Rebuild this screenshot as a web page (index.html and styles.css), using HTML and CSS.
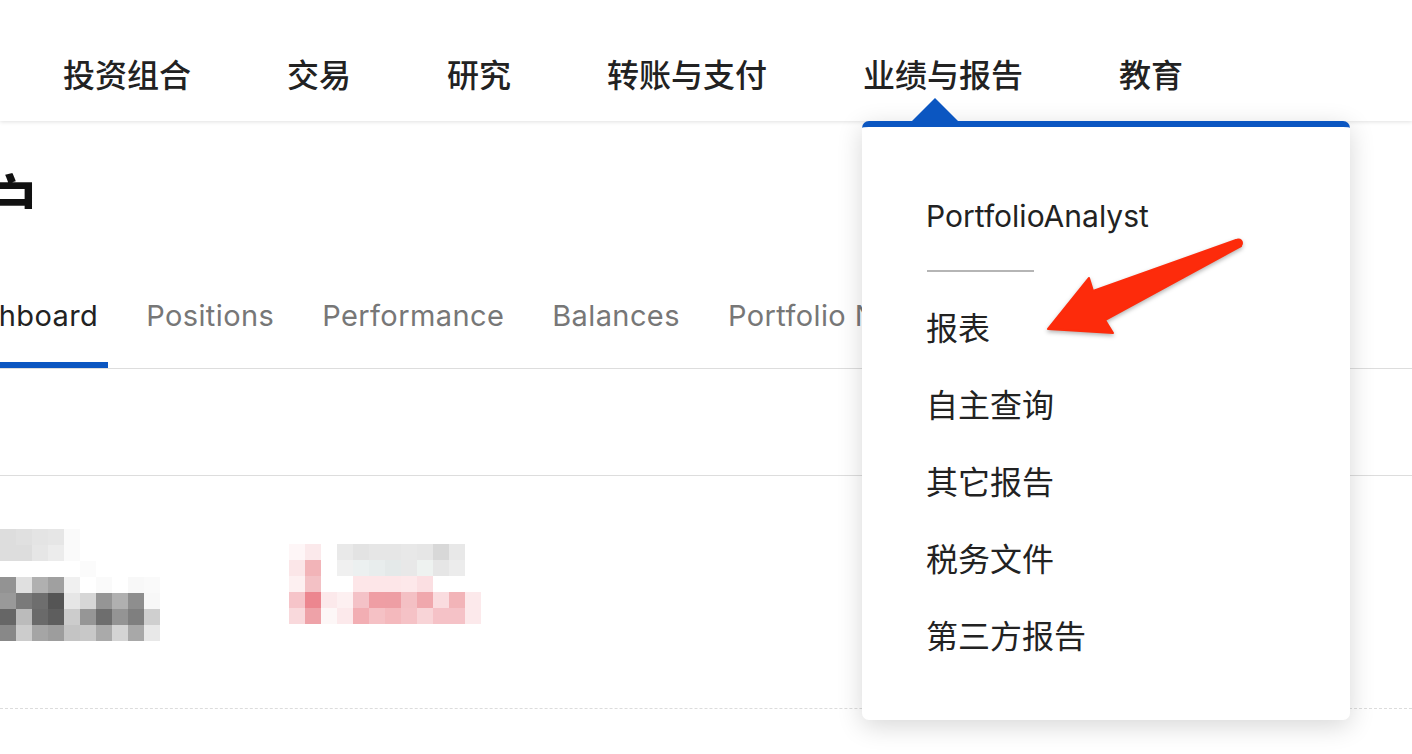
FILE: index.html
```html
<!DOCTYPE html>
<html lang="zh-CN">
<head>
    <meta charset="UTF-8">
    <meta name="viewport" content="width=device-width, initial-scale=1.0">
    <title>业绩与报告</title>
    <link rel="stylesheet" href="styles.css">
</head>
<body>
    <header id="topbar">
        <nav id="mainnav">
            <a class="navitem">投资组合</a>
            <a class="navitem">交易</a>
            <a class="navitem">研究</a>
            <a class="navitem">转账与支付</a>
            <div class="navitem open">业绩与报告
                <div class="dropdown">
                    <div class="dd-head">PortfolioAnalyst</div>
                    <div class="dd-sep"></div>
                    <a class="dd-item">报表</a>
                    <a class="dd-item">自主查询</a>
                    <a class="dd-item">其它报告</a>
                    <a class="dd-item">税务文件</a>
                    <a class="dd-item">第三方报告</a>
                </div>
            </div>
            <a class="navitem">教育</a>
        </nav>
    </header>

    <main id="page">
        <h1 class="title">账户</h1>
        <div class="tabs">
            <a class="tab active">Dashboard</a>
            <a class="tab">Positions</a>
            <a class="tab">Performance</a>
            <a class="tab">Balances</a>
            <a class="tab">Portfolio Navigator</a>
        </div>
        <div class="filters"></div>
        <div class="summary">
            <div id="blurleft" class="blur"></div>
            <div id="blurright" class="blur right"></div>
        </div>
    </main>

    <svg class="annotation" width="1412" height="754" viewBox="0 0 1412 754">
        <g class="arrow">
            <path d="M1236,240 L1093,291 L1089,278 L1048,329 L1113,333 L1105,320 L1241,246 Z"/>
            <circle cx="1238.5" cy="243" r="3.5"/>
        </g>
    </svg>

    <script>
        // pixelated (redacted) numbers, one colour per 16px cell
        var leftRows = [
            ["#ddd","#e0e0e0","#e4e4e4","#e6e6e6","#fafafa","","","","",""],
            ["#ddd","#ddd","#e6e6e6","#ececec","#fafafa","","","","",""],
            ["","","","","","#fbfbfb","","","",""],
            ["#939393","#e0e0e0","#b0b0b0","#a0a0a0","#f0f0f0","","#fafafa","","#f8f8f8","#fafafa"],
            ["#999","#7a7a7a","#6e6e6e","#555","#e6e6e6","#d6d6d6","#959595","#b0b0b0","#8e8e8e","#f8f8f8"],
            ["#666","#bbb","#6a6a6a","#5e5e5e","#ccc","#969696","#6e6e6e","#949494","#7f7f7f","#cfcfcf"],
            ["#888","#ccc","#a5a5a5","#9d9d9d","#c4c4c4","#c8c8c8","#aaa","#d4d4d4","#a8a8a8","#e8e8e8"]
        ];
        var rightRows = [
            ["#fef6f7","#fbe9eb","","#e9e9e9","#e3e3e3","#e6e6e6","#e6e6e6","#e8e8e8","#e6e6e6","#d8d8d8","#e8e8e8",""],
            ["#fbe6e8","#f2b4b8","","#f0f0f0","#ecf0f0","#e8eded","#e4e9e9","#e8e8e8","#eef2f0","#e6e6e6","#ececec",""],
            ["#fdf0f1","#f3c1c5","","","#fde6e8","#fde6e8","#fde6e8","#fde8ea","#fbdfe2","","",""],
            ["#f6c4c9","#ec868f","#fce9eb","#fdf0f1","#f4c2c7","#ef9ea4","#ee9ea4","#f4c0c4","#f0a8ad","#fadcdf","#f2b4b8","#fce9eb"],
            ["#f9d9dc","#eea2a8","#fdf7f7","#fce9eb","#f2aeb3","#f5c1c5","#f4b9bd","#f5c2c6","#f8d4d7","#f5c2c7","#f5c2c7","#fce9eb"]
        ];

        function makeBlur(id, rows){
            var clutter = "";
            rows.forEach(function(row){
                row.forEach(function(c){
                    clutter += `<div class="cell" style="background-color:${c || 'transparent'}"></div>`;
                });
            });
            var el = document.querySelector(id);
            el.style.gridTemplateColumns = `repeat(${rows[0].length}, 16px)`;
            el.innerHTML = clutter;
        }

        makeBlur("#blurleft", leftRows);
        makeBlur("#blurright", rightRows);
    </script>
</body>
</html>
```

FILE: styles.css
```css
*{
    margin: 0;
    padding: 0;
    box-sizing: border-box;
}
html,body{
    width: 100%;
    height: 100%;
}
body{
    position: relative;
    overflow: hidden;
    background-color: #fff;
    color: #222;
    font-family: Inter, "Noto Sans CJK SC", sans-serif;
}
a{
    color: inherit;
    text-decoration: none;
}

/* top navigation */
#topbar{
    position: relative;
    z-index: 5;
    height: 121px;
    background-color: #fff;
    box-shadow: 0 1px 4px rgba(0, 0, 0, 0.12);
}
#mainnav{
    display: flex;
    align-items: flex-start;
    gap: 96px;
    padding: 57px 0 0 63px;
    font-family: "Noto Sans CJK SC", sans-serif;
    font-size: 32px;
    font-weight: 500;
    line-height: 32px;
    color: #222;
}
.navitem{
    position: relative;
    white-space: nowrap;
}

/* dropdown of the open menu */
.dropdown{
    position: absolute;
    top: 64px;
    left: -1px;
    width: 488px;
    height: 599px;
    padding: 71px 0 0 64px;
    background-color: #fff;
    border-top: 6px solid #0b56c1;
    border-radius: 7px;
    box-shadow: 0 6px 26px rgba(0, 0, 0, 0.16);
    font-weight: 400;
}
.dropdown::before{
    content: "";
    position: absolute;
    top: -29px;
    left: 50px;
    border-left: 23px solid transparent;
    border-right: 23px solid transparent;
    border-bottom: 23px solid #0b56c1;
}
.dd-head{
    font-family: Inter, sans-serif;
    font-size: 30px;
    line-height: 36px;
    color: #222;
}
.dd-sep{
    width: 107px;
    height: 2px;
    margin: 36px 0 16px 1px;
    background-color: #b5b5b5;
}
.dd-item{
    display: block;
    height: 77px;
    line-height: 77px;
    font-size: 32px;
    color: #222;
}

/* page body */
#page{
    position: relative;
    z-index: 1;
}
.title{
    margin: 48px 0 0 -80px;
    font-family: "Noto Sans CJK SC", sans-serif;
    font-size: 60px;
    font-weight: 700;
    line-height: 60px;
    color: #111;
}
.tabs{
    display: flex;
    gap: 28px;
    margin: 69px 0 0 -65px;
    border-bottom: 1px solid #ddd;
    white-space: nowrap;
}
.tab{
    padding: 0 10px 28px;
    font-size: 29px;
    letter-spacing: 0.4px;
    line-height: 36px;
    color: #777;
    border-bottom: 6px solid transparent;
}
.tab.active{
    color: #222;
    border-bottom-color: #0b56c1;
}
.filters{
    height: 107px;
    border-bottom: 1px solid #ddd;
}
.summary{
    display: flex;
    align-items: flex-start;
    gap: 129px;
    height: 233px;
    padding-top: 53px;
    border-bottom: 1px dashed #dcdcdc;
}
.blur{
    display: grid;
}
.blur.right{
    margin-top: 15px;
}
.cell{
    width: 16px;
    height: 16px;
}

/* red annotation arrow drawn over the screenshot */
.annotation{
    position: absolute;
    top: 0;
    left: 0;
    z-index: 10;
    pointer-events: none;
}
.arrow{
    fill: #fd2b0b;
    stroke: #fd2b0b;
    stroke-width: 2;
    stroke-linejoin: round;
    filter: drop-shadow(0 2px 2px rgba(0, 0, 0, 0.3));
}
```
